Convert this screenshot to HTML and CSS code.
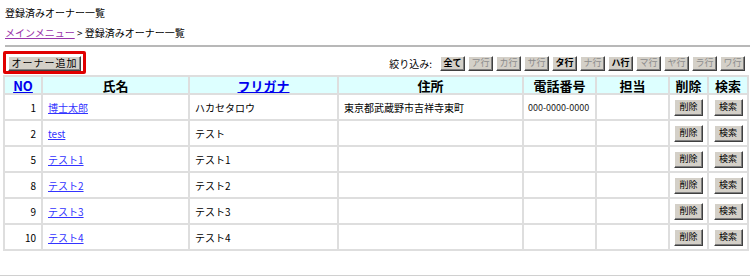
FILE: index.html
```html
<!DOCTYPE html>
<html>
<head>
  <meta charset="utf-8">
  <title>登録済みオーナー一覧</title>
  <link rel="stylesheet" href="styles.css">
</head>
<body>
  <div class="page-title">登録済みオーナー一覧</div>
  <div class="breadcrumb"><a href="#">メインメニュー</a> &gt; 登録済みオーナー一覧</div>
  <hr class="rule">

  <div class="toolbar">
    <div class="add-box"><button class="btn add-btn">オーナー追加</button></div>
    <div class="filter">
      <span class="filter-label">絞り込み:</span>
      <button class="btn small">全て</button>
      <button class="btn small off">ア行</button>
      <button class="btn small off">カ行</button>
      <button class="btn small off">サ行</button>
      <button class="btn small">タ行</button>
      <button class="btn small off">ナ行</button>
      <button class="btn small">ハ行</button>
      <button class="btn small off">マ行</button>
      <button class="btn small off">ヤ行</button>
      <button class="btn small off">ラ行</button>
      <button class="btn small off">ワ行</button>
    </div>
  </div>

  <table class="owners">
    <colgroup>
      <col class="c-no">
      <col class="c-name">
      <col class="c-kana">
      <col class="c-addr">
      <col class="c-tel">
      <col class="c-staff">
      <col class="c-del">
      <col class="c-find">
    </colgroup>
    <thead>
      <tr>
        <th><a href="#">NO</a></th>
        <th>氏名</th>
        <th><a href="#">フリガナ</a></th>
        <th>住所</th>
        <th>電話番号</th>
        <th>担当</th>
        <th>削除</th>
        <th>検索</th>
      </tr>
    </thead>
    <tbody>
      <tr>
        <td class="num">1</td>
        <td><a href="#">博士太郎</a></td>
        <td>ハカセタロウ</td>
        <td>東京都武蔵野市吉祥寺東町</td>
        <td class="tel">000-0000-0000</td>
        <td></td>
        <td class="act"><button class="btn row-btn">削除</button></td>
        <td class="act"><button class="btn row-btn">検索</button></td>
      </tr>
      <tr>
        <td class="num">2</td>
        <td><a href="#">test</a></td>
        <td>テスト</td>
        <td></td>
        <td></td>
        <td></td>
        <td class="act"><button class="btn row-btn">削除</button></td>
        <td class="act"><button class="btn row-btn">検索</button></td>
      </tr>
      <tr>
        <td class="num">5</td>
        <td><a href="#">テスト1</a></td>
        <td>テスト1</td>
        <td></td>
        <td></td>
        <td></td>
        <td class="act"><button class="btn row-btn">削除</button></td>
        <td class="act"><button class="btn row-btn">検索</button></td>
      </tr>
      <tr>
        <td class="num">8</td>
        <td><a href="#">テスト2</a></td>
        <td>テスト2</td>
        <td></td>
        <td></td>
        <td></td>
        <td class="act"><button class="btn row-btn">削除</button></td>
        <td class="act"><button class="btn row-btn">検索</button></td>
      </tr>
      <tr>
        <td class="num">9</td>
        <td><a href="#">テスト3</a></td>
        <td>テスト3</td>
        <td></td>
        <td></td>
        <td></td>
        <td class="act"><button class="btn row-btn">削除</button></td>
        <td class="act"><button class="btn row-btn">検索</button></td>
      </tr>
      <tr>
        <td class="num">10</td>
        <td><a href="#">テスト4</a></td>
        <td>テスト4</td>
        <td></td>
        <td></td>
        <td></td>
        <td class="act"><button class="btn row-btn">削除</button></td>
        <td class="act"><button class="btn row-btn">検索</button></td>
      </tr>
    </tbody>
  </table>

  <div class="footer-rule"></div>
</body>
</html>
```

FILE: styles.css
```css
body {
  margin: 0;
  padding: 0 0 0 5px;
  font-family: "Noto Sans CJK JP", "Liberation Sans", sans-serif;
  font-size: 10px;
  color: #000;
  background-color: #fff;
}
.page-title {
  padding-top: 7px;
  height: 16px;
  line-height: 12px;
}
.breadcrumb {
  padding-top: 3px;
  height: 16px;
  line-height: 14px;
}
.breadcrumb a {
  color: #9933aa;
}
.rule {
  margin: 3px 0 0 0;
  border: none;
  border-top: 2px solid #b8b8b8;
  height: 0;
}
.toolbar {
  display: flex;
  justify-content: space-between;
  align-items: center;
  margin: 4px 5px 0 -2px;
  height: 23px;
}
.add-box {
  border: 3px solid #e00000;
  border-radius: 2px;
  padding: 1px 2px;
  height: 15px;
}
.btn {
  font-family: "Noto Sans CJK JP", "Liberation Sans", sans-serif;
  background-color: #d4d0c8;
  border: 1px solid;
  border-color: #fff #404040 #404040 #fff;
  box-shadow: inset -1px -1px 0 #808080;
  color: #000;
  padding: 0;
  cursor: pointer;
}
.add-btn {
  font-size: 10px;
  height: 15px;
  width: 73px;
  letter-spacing: 1px;
  line-height: 12px;
}
.filter {
  display: flex;
  align-items: center;
  gap: 3px;
  padding-top: 1px;
}
.filter-label {
  margin-right: 5px;
}
.btn.small {
  font-size: 9px;
  height: 15px;
  width: 25px;
  line-height: 12px;
  font-weight: bold;
}
.btn.small.off {
  color: #8c8c8c;
  font-weight: normal;
  cursor: default;
}
.owners {
  margin: 1px 0 0 -2px;
  width: 744px;
  table-layout: fixed;
  border-collapse: collapse;
  border: 2px solid #dedede;
}
.owners th,
.owners td {
  border: 2px solid #dedede;
  padding: 0 5px;
  white-space: nowrap;
  overflow: hidden;
}
.owners th {
  background-color: #ddffff;
  font-size: 13px;
  font-weight: bold;
  height: 16px;
  line-height: 15px;
  text-align: center;
}
.owners th a {
  color: #0000ee;
}
.owners td {
  height: 24px;
  font-size: 10px;
}
.owners td a {
  color: #3333ff;
}
.owners td.num {
  text-align: right;
}
.owners td.tel {
  padding: 0 2px 0 4px;
  font-size: 9px;
  color: #222;
}
.owners td.act {
  text-align: center;
  padding: 0;
}
.c-no { width: 38px; }
.c-name { width: 147px; }
.c-kana { width: 149px; }
.c-addr { width: 185px; }
.c-tel { width: 73px; }
.c-staff { width: 73px; }
.c-del { width: 39px; }
.c-find { width: 40px; }
.row-btn {
  font-size: 9px;
  width: 29px;
  height: 17px;
  line-height: 12px;
}
.footer-rule {
  margin: 24px 0 0 -5px;
  border-top: 3px solid #d0d0d0;
}
```
